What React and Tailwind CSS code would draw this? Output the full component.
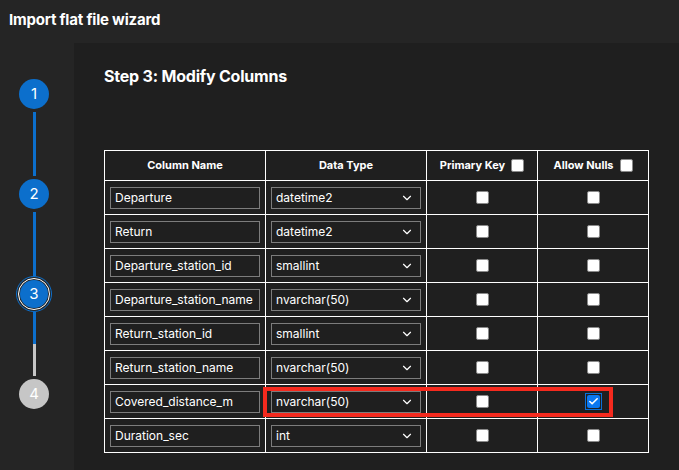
import { ChevronDown, Check } from 'lucide-react';

const rows = [
  { name: 'Departure', type: 'datetime2' },
  { name: 'Return', type: 'datetime2' },
  { name: 'Departure_station_id', type: 'smallint' },
  { name: 'Departure_station_name', type: 'nvarchar(50)' },
  { name: 'Return_station_id', type: 'smallint' },
  { name: 'Return_station_name', type: 'nvarchar(50)' },
  { name: 'Covered_distance_m', type: 'nvarchar(50)', nulls: true, marked: true },
  { name: 'Duration_sec', type: 'int' },
];

function Box({ checked }) {
  if (checked) {
    return (
      <span className="inline-flex p-[1px] border border-[#0a6fd8]">
        <span className="w-[13px] h-[13px] rounded-[2px] bg-[#0b78f0] flex items-center justify-center">
          <Check size={11} strokeWidth={3.5} className="text-white" />
        </span>
      </span>
    );
  }
  return <span className="inline-block w-[13px] h-[13px] rounded-[2px] bg-white border border-[#8a8a8a] align-middle" />;
}

function Step({ n, state, last }) {
  const circle =
    state === 'done'
      ? 'bg-[#0c6fcc] text-white'
      : state === 'todo'
      ? 'bg-[#c6c6c6] text-white'
      : 'bg-[#0c6fcc] text-white';
  return (
    <div className="flex items-center justify-center w-[36px] h-[36px]">
      {state === 'current' ? (
        <div className="w-[36px] h-[36px] rounded-full border-[1.5px] border-[#0c6fcc] flex items-center justify-center">
          <div className="w-[32px] h-[32px] rounded-full border-[1.5px] border-white flex items-center justify-center">
            <div className={`w-[28px] h-[28px] rounded-full flex items-center justify-center text-[15px] ${circle}`}>{n}</div>
          </div>
        </div>
      ) : (
        <div className={`w-[30px] h-[30px] rounded-full flex items-center justify-center text-[15px] ${circle}`}>{n}</div>
      )}
    </div>
  );
}

export default function App() {
  return (
    <div className="w-[679px] h-[470px] bg-[#252525] text-white flex flex-col overflow-hidden" style={{ fontFamily: 'Inter, "Liberation Sans", sans-serif' }}>
      {/* Title bar */}
      <div className="h-[43px] flex-shrink-0 flex items-center pl-[9px] pb-[3px] text-[15px] font-bold tracking-[-0.2px]">
        Import flat file wizard
      </div>

      <div className="flex-1 flex min-h-0">
        {/* Stepper */}
        <div className="w-[74px] flex-shrink-0 flex flex-col items-center pr-[6px] pt-[33px]">
          <Step n="1" state="done" />
          <div className="w-[3px] h-[64px] bg-[#0c6fcc]" />
          <Step n="2" state="done" />
          <div className="w-[3px] h-[64px] bg-[#0c6fcc]" />
          <Step n="3" state="current" />
          <div className="w-[3px] h-[32px] bg-[#0c6fcc]" />
          <div className="w-[3px] h-[32px] bg-[#c6c6c6]" />
          <Step n="4" state="todo" />
        </div>

        {/* Main */}
        <div className="flex-1 bg-[#1f1f1f] pl-[30px] pt-[23px]">
          <h2 className="text-[16px] font-bold tracking-[-0.2px] leading-[20px]">Step 3: Modify Columns</h2>

          <div className="relative mt-[64px] w-[545px]">
            <table className="border-collapse text-[12px]">
              <thead>
                <tr className="h-[30px]">
                  <th className="w-[161px] border border-white font-bold text-[11px]">Column Name</th>
                  <th className="w-[161px] border border-white font-bold text-[11px]">Data Type</th>
                  <th className="w-[111px] border border-white font-bold text-[11px]">
                    <span className="inline-flex items-center gap-[6px]">Primary Key <Box /></span>
                  </th>
                  <th className="w-[111px] border border-white font-bold text-[11px]">
                    <span className="inline-flex items-center gap-[6px]">Allow Nulls <Box /></span>
                  </th>
                </tr>
              </thead>
              <tbody>
                {rows.map((r) => (
                  <tr key={r.name} className="h-[34px]">
                    <td className="border border-white px-[5px]">
                      <div className="h-[22px] border border-[#7c7c7c] flex items-center px-[4px]">{r.name}</div>
                    </td>
                    <td className="border border-white px-[5px]">
                      <div className="h-[22px] border border-[#7c7c7c] flex items-center justify-between pl-[4px] pr-[6px]">
                        <span>{r.type}</span>
                        <ChevronDown size={14} strokeWidth={2} className="text-white" />
                      </div>
                    </td>
                    <td className="border border-white text-center">
                      <div className="flex justify-center"><Box /></div>
                    </td>
                    <td className="border border-white text-center">
                      <div className="flex justify-center"><Box checked={r.nulls} /></div>
                    </td>
                  </tr>
                ))}
              </tbody>
            </table>
            {/* red highlight */}
            <div className="absolute left-[159px] top-[237px] w-[350px] h-[30px] border-[4px] border-[#f52a1e] pointer-events-none" />
          </div>
        </div>
      </div>
    </div>
  );
}
